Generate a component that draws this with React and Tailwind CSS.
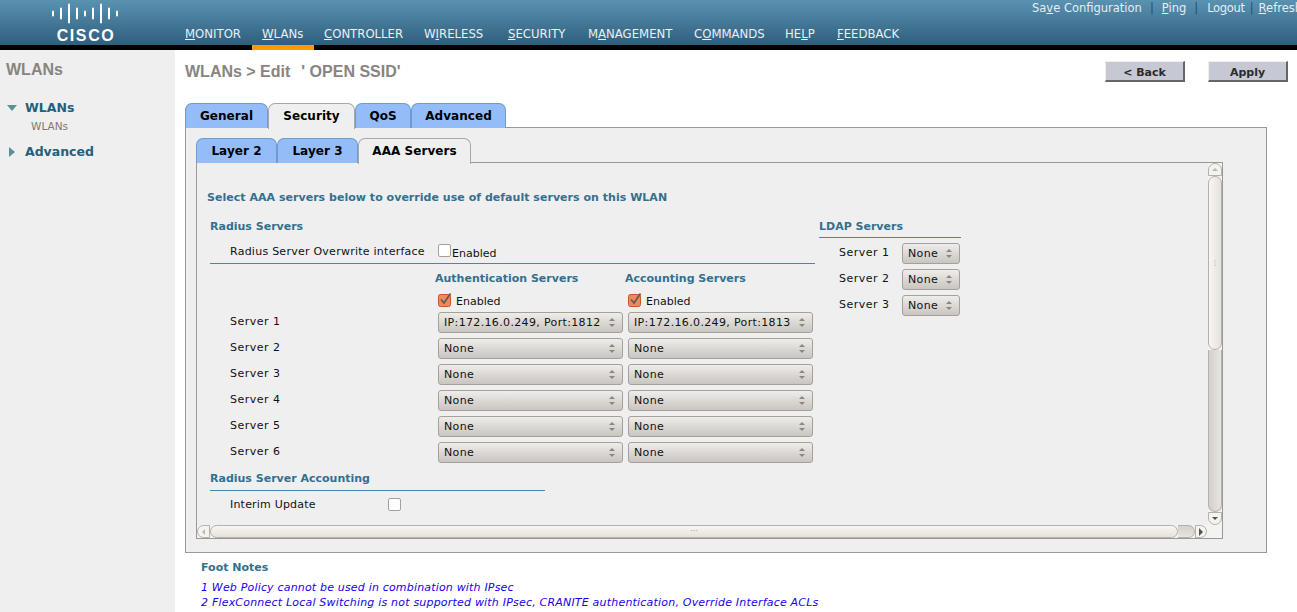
const navItems = [
  ["", "M", "ONITOR", "w-[57px]"],
  ["", "W", "LANs", "w-[42px]"],
  ["", "C", "ONTROLLER", "w-[80px]"],
  ["W", "I", "RELESS", "w-[64px]"],
  ["", "S", "ECURITY", "w-[60px]"],
  ["M", "A", "NAGEMENT", "w-[86px]"],
  ["C", "O", "MMANDS", "w-[71px]"],
  ["HE", "L", "P", "w-[32px]"],
  ["", "F", "EEDBACK", "w-[63px]"],
];

function Logo() {
  const bars = [[4, 3], [12, 6], [20, 10], [28, 6], [36, 3], [44, 6], [52, 10], [60, 6], [68, 3]];
  return (
    <div className="flex h-[45px] w-[170px] shrink-0 flex-col items-center pt-[3px]">
      <svg width="72" height="21" viewBox="0 0 72 21" fill="white">
        {bars.map(([x, h]) => (
          <rect key={x} x={x - 1} y={10.5 - h} width="2" height={h * 2} rx="1" />
        ))}
      </svg>
      <span className="mt-[3px] pl-[2px] text-[16px] leading-[17px] font-bold tracking-[1.6px] text-white font-['Liberation_Sans',sans-serif]">
        CISCO
      </span>
    </div>
  );
}

function Header() {
  return (
    <header className="relative h-[50px] shrink-0 border-b-[5px] border-black bg-gradient-to-b from-[#5a92b2] to-[#2f5f7d]">
      <div className="flex h-[45px]">
        <Logo />
        <nav className="flex items-end gap-[20px] pl-[15px] text-[13px] leading-[16px] text-[#e8f0f5] font-['DejaVu_Sans_Condensed','DejaVu_Sans',sans-serif]">
          {navItems.map(([a, b, c, w], i) => (
            <div key={c} className={`relative whitespace-nowrap pb-[3px] ${w}`}>
              <span>
                {a}
                <u>{b}</u>
                {c}
              </span>
              {i === 1 && <div className="absolute -right-[10px] -bottom-[5px] -left-[10px] h-[5px] bg-[#ff9900]" />}
            </div>
          ))}
        </nav>
      </div>
      <div className="absolute top-[1px] right-0 flex h-[16px] w-[265px] items-center overflow-hidden whitespace-nowrap text-[11.5px] text-[#e4eef4] font-['DejaVu_Sans',sans-serif]">
        <span>Sa<u>v</u>e Configuration</span>
        <span className="mx-[8px] text-[#20506e]">|</span>
        <span><u>P</u>ing</span>
        <span className="mx-[8px] text-[#20506e]">|</span>
        <span className="ml-[1px] tracking-[-0.3px]">Lo<u>g</u>out</span>
        <span className="mx-[5px] text-[#20506e]">|</span>
        <span><u>R</u>efresh</span>
      </div>
    </header>
  );
}

function Sidebar() {
  return (
    <aside className="w-[175px] shrink-0 bg-[#efefef] pl-[6px] font-['DejaVu_Sans',sans-serif]">
      <div className="pt-[11px] text-[16px] leading-[18px] font-bold text-[#88847f] font-['Liberation_Sans',sans-serif]">WLANs</div>
      <div className="mt-[21px] flex items-center gap-[8px] text-[12.5px] leading-[16px] font-bold text-[#22607f]">
        <span className="ml-[1px] h-0 w-0 border-x-[5px] border-t-[6px] border-x-transparent border-t-[#5c9098]" />
        WLANs
      </div>
      <div className="mt-[3px] pl-[25px] text-[10.5px] leading-[14px] text-[#7d7873]">WLANs</div>
      <div className="mt-[11px] flex items-center gap-[10px] pl-[3px] text-[12.5px] leading-[16px] font-bold text-[#22607f]">
        <span className="h-0 w-0 border-y-[5px] border-l-[6px] border-y-transparent border-l-[#5c9098]" />
        Advanced
      </div>
    </aside>
  );
}

function Tab({ label, active, width }) {
  return (
    <div
      className={
        (active
          ? "relative z-10 -mb-px flex h-[26px] items-center justify-center rounded-t-[7px] border border-b-0 border-[#a8a8a8] bg-[#efefef] pb-[2px] text-[12px] tracking-[0.05px] font-bold text-black "
          : "flex h-[25px] items-center justify-center rounded-t-[7px] border border-b-0 border-[#6f9bd1] bg-[#94bcf8] text-[12px] tracking-[0.05px] font-bold text-black ") + width
      }
    >
      {label}
    </div>
  );
}

function Select({ value, width = "w-[185px]" }) {
  return (
    <div
      className={`flex h-[21px] shrink-0 items-center justify-between rounded-[3px] border border-[#a5a19a] bg-gradient-to-b from-[#efedea] to-[#c9c5c0] pr-[7px] pl-[5px] text-[11px] tracking-[0.35px] text-[#111] ${width}`}
    >
      <span className="pt-[2px]">{value}</span>
      <span className="flex flex-col gap-[3px]">
        <span className="h-0 w-0 border-x-[3px] border-b-[3px] border-x-transparent border-b-[#8a8680]" />
        <span className="h-0 w-0 border-x-[3px] border-t-[3px] border-x-transparent border-t-[#8a8680]" />
      </span>
    </div>
  );
}

function Checked() {
  return (
    <svg width="14" height="15" viewBox="0 0 14 15" className="shrink-0">
      <rect x="0.5" y="2.5" width="12" height="12" rx="2" fill="#e98a63" stroke="#c9532b" />
      <path d="M3 7.5 L6 11 L12.5 1.5" fill="none" stroke="#6b5a4c" strokeWidth="1.8" />
    </svg>
  );
}

function Unchecked({ className = "" }) {
  return <span className={`block h-[13px] w-[13px] shrink-0 rounded-[2px] border border-[#a5a19a] bg-white ${className}`} />;
}

function SectionTitle({ children }) {
  return <div className="text-[11px] leading-[14px] font-bold text-[#33708f]">{children}</div>;
}

function ServerRow({ n, auth = "None", acct = "None" }) {
  return (
    <div className="flex h-[26px] items-center">
      <div className="w-[228px] pl-[20px] text-[11px] tracking-[0.5px]">Server {n}</div>
      <Select value={auth} />
      <div className="w-[5px]" />
      <Select value={acct} />
    </div>
  );
}

function Scrollbars({ children }) {
  return (
    <div className="flex h-[375px] flex-col">
      <div className="flex min-h-0 flex-1">
        <div className="min-w-0 flex-1">{children}</div>
        {/* vertical scrollbar */}
        <div className="flex w-[14px] flex-col bg-[#f5f3f0]">
          <div className="flex h-[13px] items-center justify-center rounded-t-[7px] border border-[#b5b0a9] bg-[#f5f3f0]">
            <span className="h-0 w-0 border-x-[3px] border-b-[3px] border-x-transparent border-b-[#bbb7b1]" />
          </div>
          <div className="flex h-[174px] items-center justify-center rounded-[7px] border border-[#b5b0a9] bg-gradient-to-r from-[#f8f6f3] to-[#e6e2dc] text-[7px] leading-none text-[#99958f]">
            ⋮
          </div>
          <div className="min-h-0 flex-1 rounded-b-[7px] border-x border-b border-[#b5b0a9] bg-gradient-to-r from-[#d3cfc9] to-[#e8e5e0]" />
          <div className="flex h-[13px] items-center justify-center rounded-b-[7px] border border-[#b5b0a9] bg-[#f5f3f0]">
            <span className="h-0 w-0 border-x-[3px] border-t-[3px] border-x-transparent border-t-[#55524e]" />
          </div>
        </div>
      </div>
      {/* horizontal scrollbar */}
      <div className="flex h-[13px] shrink-0 bg-[#f5f3f0]">
        <div className="flex w-[13px] items-center justify-center rounded-l-[7px] border border-[#b5b0a9]">
          <span className="h-0 w-0 border-y-[3px] border-r-[3px] border-y-transparent border-r-[#bbb7b1]" />
        </div>
        <div className="flex w-[968px] items-center justify-center rounded-[7px] border border-[#b5b0a9] bg-gradient-to-b from-[#f8f6f3] to-[#e6e2dc] text-[8px] leading-none text-[#99958f]">
          ···
        </div>
        <div className="w-[17px] rounded-r-[7px] border-y border-r border-[#b5b0a9] bg-gradient-to-b from-[#d3cfc9] to-[#e8e5e0]" />
        <div className="flex w-[12px] items-center justify-center rounded-r-[7px] border border-[#b5b0a9]">
          <span className="h-0 w-0 border-y-[4px] border-l-[4px] border-y-transparent border-l-[#55524e]" />
        </div>
        <div className="flex-1" />
      </div>
    </div>
  );
}

function AaaForm() {
  return (
    <div className="pt-[28px] pl-[10px] text-[#111]">
      <div className="text-[11px] leading-[14px] font-bold tracking-[0.03px] text-[#33708f]">Select AAA servers below to override use of default servers on this WLAN</div>
      <div className="mt-[15px] flex pl-[3px]">
        <div className="w-[609px]">
          <div className="w-[605px]">
            <SectionTitle>Radius Servers</SectionTitle>
            <div className="flex h-[30px] items-start border-b border-[#4c86a6] pt-[3px] pl-[20px] text-[11px]">
              <span className="w-[208px] pt-[7px] tracking-[0.25px]">Radius Server Overwrite interface</span>
              <Unchecked className="mt-[7px]" />
              <span className="pt-[9px] pl-[1px]">Enabled</span>
            </div>
          </div>
          <div className="flex h-[23px] items-end pb-[1px] pl-[225px]">
            <div className="w-[190px]"><SectionTitle>Authentication Servers</SectionTitle></div>
            <SectionTitle>Accounting Servers</SectionTitle>
          </div>
          <div className="flex h-[22px] items-center pt-[2px] pl-[228px] text-[11px]">
            <div className="flex w-[190px] items-center gap-[4px]"><Checked /><span className="pt-[7px]">Enabled</span></div>
            <div className="flex items-center gap-[4px]"><Checked /><span className="pt-[7px]">Enabled</span></div>
          </div>
          <ServerRow n={1} auth="IP:172.16.0.249, Port:1812" acct="IP:172.16.0.249, Port:1813" />
          <ServerRow n={2} />
          <ServerRow n={3} />
          <ServerRow n={4} />
          <ServerRow n={5} />
          <ServerRow n={6} />
          <div className="w-[335px] border-b border-[#4c86a6] pt-[7px] pb-[4px]">
            <SectionTitle>Radius Server Accounting</SectionTitle>
          </div>
          <div className="flex h-[27px] items-center pl-[20px] text-[11px] tracking-[0.2px]">
            <span className="w-[158px] pt-[2px]">Interim Update</span>
            <Unchecked />
          </div>
        </div>
        <div className="w-[142px]">
          <div className="border-b border-[#4c86a6] pb-[3px]"><SectionTitle>LDAP Servers</SectionTitle></div>
          <div className="pt-[2px]">
            {[1, 2, 3].map((n) => (
              <div key={n} className="flex h-[26px] items-center">
                <div className="w-[83px] pl-[20px] text-[11px] tracking-[0.5px]">Server {n}</div>
                <Select value="None" width="w-[58px]" />
              </div>
            ))}
          </div>
        </div>
      </div>
    </div>
  );
}

export default function App() {
  return (
    <div className="flex h-[612px] w-[1297px] flex-col overflow-hidden bg-white font-['DejaVu_Sans',sans-serif]">
      <Header />
      <div className="flex min-h-0 flex-1">
        <Sidebar />
        <main className="min-w-0 flex-1 pt-[11px] pl-[10px]">
          <div className="flex h-[42px] justify-between pr-[9px]">
            <h1 className="pt-[1px] text-[16px] leading-[20px] font-bold text-[#88847f] font-['Liberation_Sans',sans-serif]">
              WLANs &gt; Edit<span className="ml-[11px]">' OPEN SSID'</span>
            </h1>
            <div className="flex gap-[23px]">
              <button className="h-[21px] w-[80px] border border-r-2 border-b-2 border-t-[#eee] border-r-[#666] border-b-[#666] border-l-[#eee] bg-[#c6c9d4] pt-[3px] text-[11px] font-bold text-[#2b2b2b]">&lt; Back</button>
              <button className="h-[21px] w-[80px] border border-r-2 border-b-2 border-t-[#eee] border-r-[#666] border-b-[#666] border-l-[#eee] bg-[#c6c9d4] pt-[3px] text-[11px] font-bold text-[#2b2b2b]">Apply</button>
            </div>
          </div>
          <div className="relative z-10 -mb-px flex items-end">
            <Tab label="General" width="w-[83px]" />
            <Tab label="Security" active width="w-[87px]" />
            <Tab label="QoS" width="w-[56px]" />
            <Tab label="Advanced" width="w-[95px]" />
          </div>
          <div className="h-[426px] w-[1082px] border border-[#999] bg-[#efefef] pt-[10px] pl-[10px]">
            <div className="relative z-10 -mb-px flex items-end">
              <Tab label="Layer 2" width="w-[81px]" />
              <Tab label="Layer 3" width="w-[81px]" />
              <Tab label="AAA Servers" active width="w-[113px]" />
            </div>
            <div className="w-[1027px] border border-[#999]">
              <Scrollbars>
                <AaaForm />
              </Scrollbars>
            </div>
          </div>
          <div className="pt-[8px] pl-[16px]">
            <div className="text-[11px] leading-[14px] font-bold text-[#33708f]">Foot Notes</div>
            <div className="mt-[5px] text-[11px] leading-[15px] tracking-[0.18px] text-[#1a00ee] italic">1 Web Policy cannot be used in combination with IPsec</div>
            <div className="text-[11px] leading-[15px] tracking-[0.2px] text-[#1a00ee] italic">2 FlexConnect Local Switching is not supported with IPsec, CRANITE authentication, Override Interface ACLs</div>
          </div>
        </main>
      </div>
    </div>
  );
}
